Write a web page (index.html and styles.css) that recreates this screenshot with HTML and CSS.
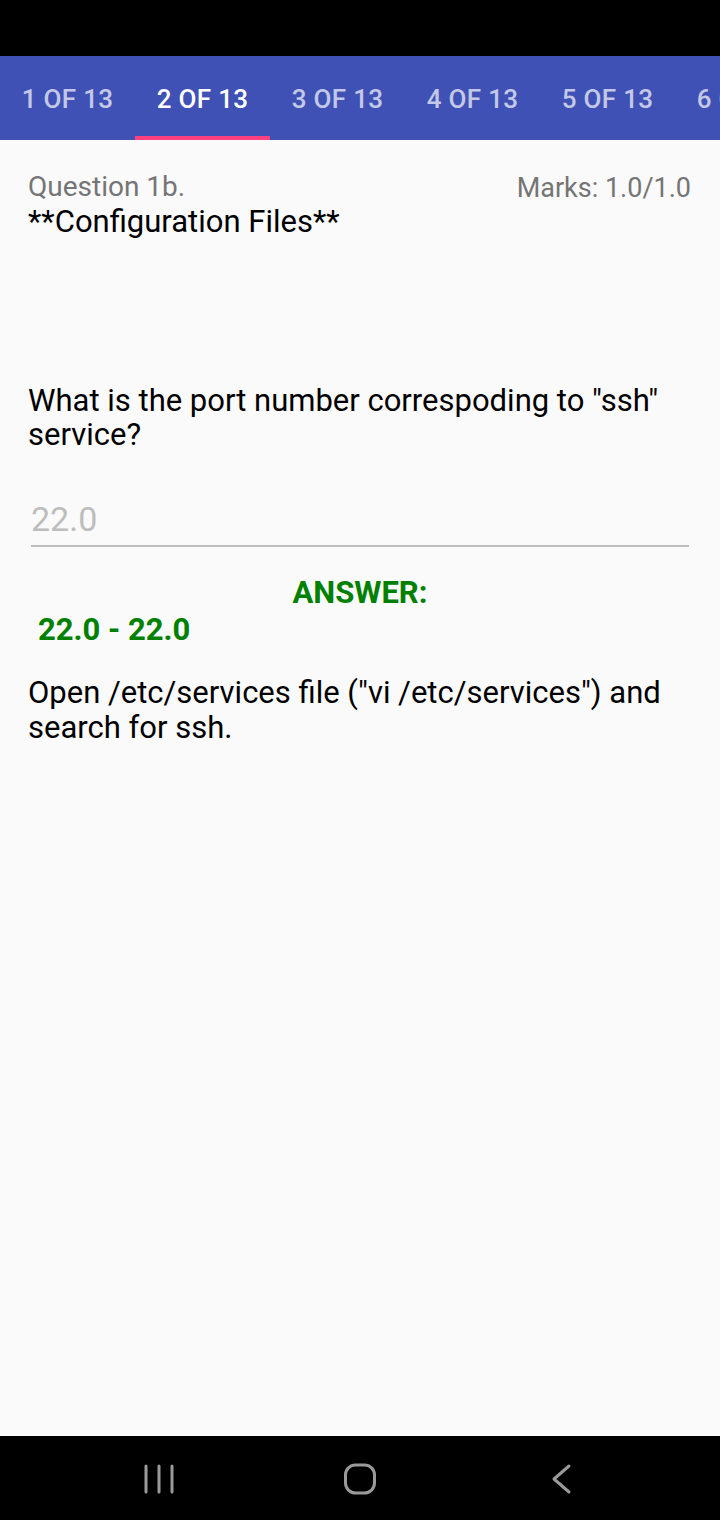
FILE: index.html
```html
<!DOCTYPE html>
<html>
<head>
<meta charset="utf-8">
<link rel="stylesheet" href="styles.css">
</head>
<body>
<div class="screen">
  <div class="statusbar"></div>
  <div class="tabs">
    <div class="tab">1 OF 13</div>
    <div class="tab active">2 OF 13</div>
    <div class="tab">3 OF 13</div>
    <div class="tab">4 OF 13</div>
    <div class="tab">5 OF 13</div>
    <div class="tab">6 OF 13</div>
  </div>
  <main class="content">
    <div class="head">
      <div class="head-left">
        <div class="qnum">Question 1b.</div>
        <div class="qtitle">**Configuration Files**</div>
      </div>
      <div class="marks">Marks: 1.0/1.0</div>
    </div>
    <p class="question">What is the port number correspoding to "ssh" service?</p>
    <div class="input">22.0</div>
    <div class="answer-label">ANSWER:</div>
    <div class="answer-value">22.0 - 22.0</div>
    <p class="explain">Open /etc/services file ("vi /etc/services") and search for ssh.</p>
  </main>
  <div class="navbar">
    <svg class="nav-icon" width="40" height="40" viewBox="0 0 40 40"><g stroke="#9a9a9a" stroke-width="3" stroke-linecap="round"><line x1="7" y1="7" x2="7" y2="33"/><line x1="20" y1="7" x2="20" y2="33"/><line x1="33" y1="7" x2="33" y2="33"/></g></svg>
    <svg class="nav-icon" width="40" height="40" viewBox="0 0 40 40"><rect x="5.5" y="6" width="29" height="28" rx="10" fill="none" stroke="#9a9a9a" stroke-width="3"/></svg>
    <svg class="nav-icon" width="40" height="40" viewBox="0 0 40 40"><polyline points="28,7 13,20 28,33" fill="none" stroke="#9a9a9a" stroke-width="3" stroke-linecap="round" stroke-linejoin="round"/></svg>
  </div>
</div>
</body>
</html>
```
FILE: styles.css
```css
* { box-sizing: border-box; }
html, body { margin: 0; padding: 0; }
body {
  width: 720px;
  height: 1520px;
  background: #fafafa;
  font-family: Roboto, "Noto Sans", sans-serif;
  overflow: hidden;
}
.screen {
  display: flex;
  flex-direction: column;
  height: 1520px;
}
.statusbar {
  height: 56px;
  background: #000;
  flex: none;
}
.tabs {
  height: 84px;
  background: #3f51b5;
  display: flex;
  flex: none;
  overflow: hidden;
}
.tab {
  flex: none;
  width: 135px;
  display: flex;
  align-items: center;
  justify-content: center;
  color: rgba(255,255,255,0.7);
  font-weight: 500;
  font-size: 26px;
  white-space: nowrap;
  letter-spacing: 0.3px;
  border-bottom: 4px solid transparent;
  padding-top: 5px;
}
.tab.active {
  color: #fff;
  border-bottom-color: #ff4081;
}
.content {
  flex: 1;
  padding: 30px 28px 0 28px;
}
.head {
  display: flex;
  justify-content: space-between;
  align-items: flex-start;
}
.qnum, .marks {
  color: #757575;
  font-size: 28px;
  line-height: 34px;
}
.marks { padding-right: 1px; padding-top: 1px; font-size: 27px; }
.qtitle {
  color: #000;
  font-size: 31px;
  line-height: 36px;
}
.question {
  margin: 144px 0 0 0;
  font-size: 31px;
  line-height: 34px;
  color: #000;
  padding-right: 10px;
}
.input {
  margin: 46px 3px 0 3px;
  font-size: 34px;
  color: #bdbdbd;
  line-height: 42px;
  padding-bottom: 5px;
  border-bottom: 2px solid #bdbdbd;
}
.answer-label {
  margin-top: 28px;
  text-align: center;
  color: #008000;
  font-weight: 700;
  font-size: 31px;
  line-height: 36px;
}
.answer-value {
  padding-left: 10px;
  color: #008000;
  font-weight: 700;
  font-size: 31px;
  line-height: 38px;
}
.explain {
  margin: 26px 0 0 0;
  font-size: 31px;
  line-height: 35px;
  color: #000;
}
.navbar {
  height: 84px;
  background: #000;
  flex: none;
  display: flex;
  justify-content: center;
  align-items: center;
  gap: 161px;
  padding-top: 2px;
}
```
